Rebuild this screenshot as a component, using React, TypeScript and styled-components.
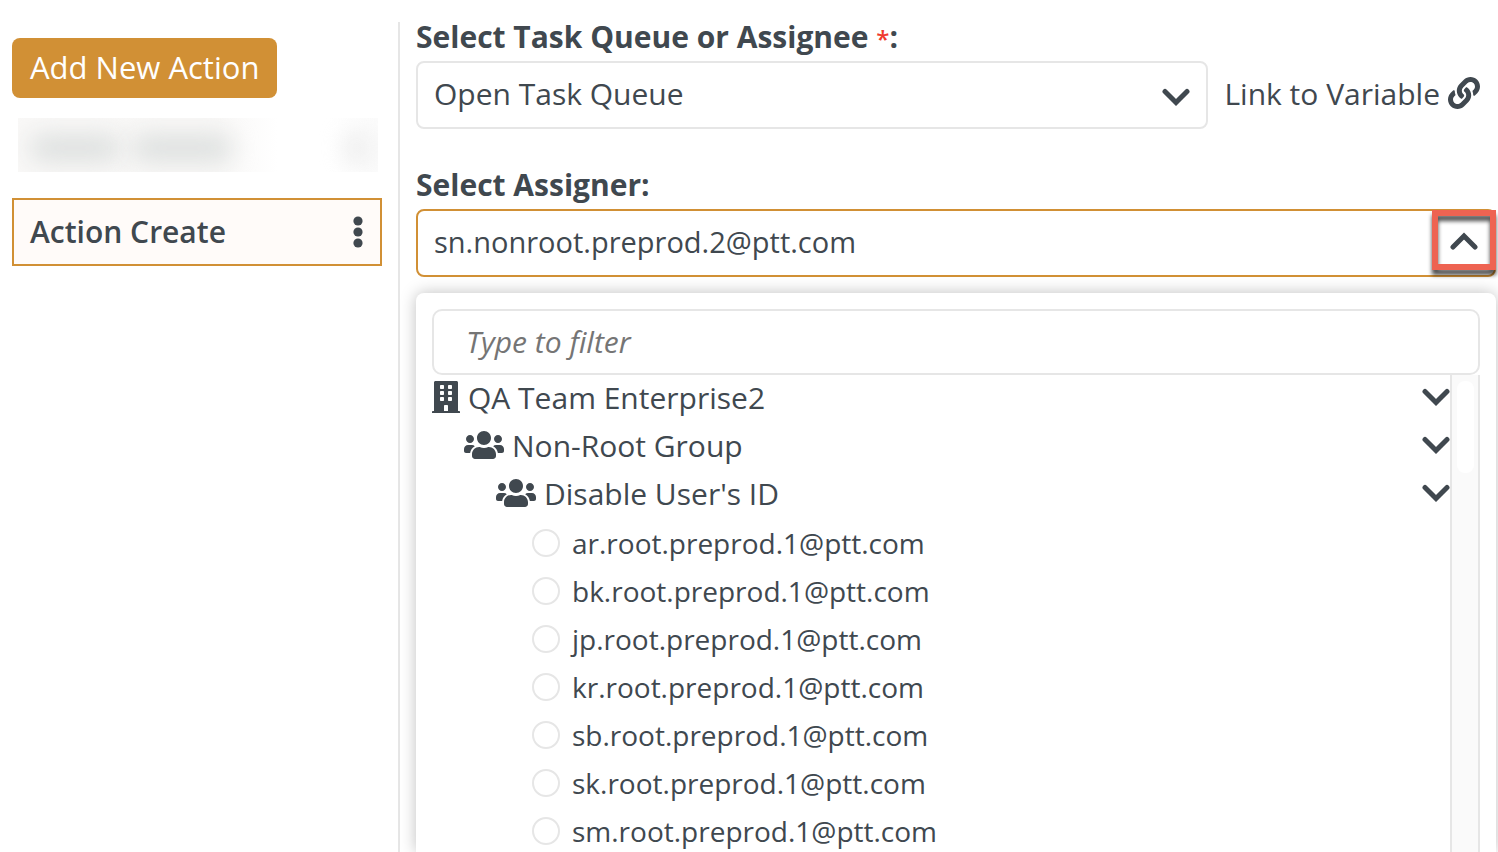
import React, { useState } from "react";
import styled, { createGlobalStyle } from "styled-components";
import { FaBuilding, FaLink, FaUsers } from "react-icons/fa";

const ink = "#40484f";
const line = "#e6e6e6";
const accent = "#d19035";

const GlobalStyle = createGlobalStyle`
  *, *::before, *::after { box-sizing: border-box; }
  body { margin: 0; background: #fff; }
  body, button, input, select {
    font-family: "Open Sans", "Noto Sans", sans-serif;
    font-size: 30px;
    line-height: 40px;
    color: ${ink};
  }
`;

const Page = styled.div`
  display: flex;
  height: 100vh;
  padding-top: 22px;
  overflow: hidden;
`;

const Sidebar = styled.aside`
  flex: none;
  width: 400px;
  padding: 16px 16px 0 12px;
  border-right: 2px solid ${line};
`;

const AddButton = styled.button`
  display: block;
  height: 60px;
  padding: 0 18px 2px;
  border: 0;
  border-radius: 8px;
  background: ${accent};
  color: #fff;
  font-size: 31px;
`;

const RedactedRow = styled.div`
  display: flex;
  align-items: center;
  gap: 12px;
  height: 54px;
  margin: 20px 4px 26px 6px;
  padding: 6px 10px 0 12px;
  overflow: hidden;
  background: linear-gradient(90deg, #f9f8f7 0, #f9f8f7 200px, #fff 260px, #fff 310px, #fbfbfb 360px);
`;

const Smudge = styled.span<{ $width: number; $end?: boolean }>`
  width: ${(p) => p.$width}px;
  height: 26px;
  margin-left: ${(p) => (p.$end ? "auto" : "0")};
  border-radius: 12px;
  background: ${(p) => (p.$end ? "#e6e6e6" : "#dcdfde")};
  filter: blur(12px);
`;

const ActionItem = styled.div`
  display: flex;
  align-items: center;
  justify-content: space-between;
  height: 68px;
  padding: 0 16px;
  border: 2px solid ${accent};
  background: #fffbf9;
  font-weight: 600;
`;

const IconButton = styled.button`
  display: flex;
  align-items: center;
  justify-content: center;
  padding: 0;
  border: 0;
  background: none;
`;

const Main = styled.main`
  flex: 1;
  min-width: 0;
  display: flex;
  flex-direction: column;
  padding: 0 2px 0 16px;
`;

const Label = styled.label`
  height: 39px;
  line-height: 30px;
  font-weight: 700;
`;

const Required = styled.span`
  color: #f03a2e;
  font-size: 24px;
  font-weight: 600;
`;

const QueueRow = styled.div`
  display: flex;
  align-items: center;
  gap: 16px;
  margin-bottom: 41px;
  padding-right: 16px;
`;

const SelectWrap = styled.div`
  position: relative;
  flex: 1;
  svg {
    position: absolute;
    right: 18px;
    top: 20px;
    pointer-events: none;
  }
`;

const Select = styled.select`
  appearance: none;
  display: block;
  width: 100%;
  height: 68px;
  padding: 0 56px 2px 16px;
  border: 2px solid ${line};
  border-radius: 8px;
  background: #fff;
`;

const VariableLink = styled.a`
  display: flex;
  align-items: center;
  gap: 8px;
  padding-bottom: 2px;
  color: ${ink};
  text-decoration: none;
  white-space: nowrap;
  svg { margin-bottom: 2px; }
`;

const Combo = styled.div`
  position: relative;
  flex: none;
  display: flex;
  height: 68px;
  margin-bottom: 16px;
  border: 2px solid ${accent};
  border-radius: 8px;
`;

const ComboInput = styled.input`
  flex: 1;
  min-width: 0;
  padding: 0 16px 2px;
  border: 0;
  background: none;
  outline: none;
  font-size: 29px;
`;

const ComboToggle = styled(IconButton)`
  width: 60px;
`;

const Highlight = styled.span`
  position: absolute;
  top: -1px;
  right: -2px;
  width: 64px;
  height: 60px;
  border: 6px solid #ee6352;
  filter: drop-shadow(0 5px 2px rgba(0, 0, 0, 0.7));
  pointer-events: none;
`;

const Panel = styled.div`
  flex: 1;
  min-height: 0;
  display: flex;
  flex-direction: column;
  padding: 16px 16px 0;
  border-radius: 8px 8px 0 0;
  background: #fff;
  box-shadow: 0 0 16px rgba(0, 0, 0, 0.25);
`;

const Filter = styled.input`
  flex: none;
  width: 100%;
  height: 66px;
  padding: 0 32px 2px;
  border: 2px solid ${line};
  border-radius: 10px;
  background: #fff;
  &::placeholder {
    color: #757575;
    font-style: italic;
    opacity: 1;
  }
`;

const TreeArea = styled.div`
  flex: 1;
  min-height: 0;
  display: flex;
`;

const Tree = styled.div`
  flex: 1;
  overflow: hidden;
`;

const Branch = styled.div<{ $level: number }>`
  display: flex;
  align-items: center;
  gap: 8px;
  height: 48px;
  padding-left: ${(p) => p.$level * 32}px;
  padding-bottom: 2px;
  svg { margin-bottom: 2px; }
`;

const BranchName = styled.span`
  flex: 1;
`;

const Person = styled.label`
  display: flex;
  align-items: center;
  gap: 12px;
  height: 48px;
  padding-left: 100px;
  font-size: 28px;
`;

const Radio = styled.input`
  appearance: none;
  width: 28px;
  height: 28px;
  margin: 0;
  border: 2px solid ${line};
  border-radius: 50%;
  background: #fff;
  &:checked { border: 8px solid ${accent}; }
`;

const Track = styled.div`
  flex: none;
  width: 30px;
  padding: 6px 4px 0 5px;
  border: solid ${line};
  border-width: 0 2px;
  background: #fafafa;
`;

const Thumb = styled.div`
  width: 17px;
  height: 92px;
  border-radius: 8px;
  background: #fff;
`;

const Chevron = ({ up }: { up?: boolean }) => (
  <svg width="28" height="32" viewBox="0 0 28 32" fill="none" stroke={ink} strokeWidth="5" strokeLinecap="round" aria-hidden="true">
    <path d={up ? "M3 20 14 9 25 20" : "M3 10.5 14 21.5 25 10.5"} />
  </svg>
);

const Dots = () => (
  <svg width="12" height="32" viewBox="0 0 12 32" fill={ink} aria-hidden="true">
    <circle cx="6" cy="5" r="4.6" />
    <circle cx="6" cy="16" r="4.6" />
    <circle cx="6" cy="27" r="4.6" />
  </svg>
);

const branches = [
  { name: "QA Team Enterprise2", Icon: FaBuilding, width: 28 },
  { name: "Non-Root Group", Icon: FaUsers, width: 40 },
  { name: "Disable User's ID", Icon: FaUsers, width: 40 },
];

const people = ["ar", "bk", "jp", "kr", "sb", "sk", "sm"].map((p) => `${p}.root.preprod.1@ptt.com`);

export default function App() {
  const [assigner, setAssigner] = useState("sn.nonroot.preprod.2@ptt.com");
  const [open, setOpen] = useState(true);
  return (
    <>
      <GlobalStyle />
      <Page>
        <Sidebar>
          <AddButton type="button">Add New Action</AddButton>
          <RedactedRow aria-hidden="true">
            <Smudge $width={90} />
            <Smudge $width={100} />
            <Smudge $width={22} $end />
          </RedactedRow>
          <ActionItem>
            Action Create
            <IconButton type="button" aria-label="Action menu">
              <Dots />
            </IconButton>
          </ActionItem>
        </Sidebar>
        <Main>
          <Label htmlFor="queue">
            Select Task Queue or Assignee <Required>*</Required>:
          </Label>
          <QueueRow>
            <SelectWrap>
              <Select id="queue">
                <option>Open Task Queue</option>
              </Select>
              <Chevron />
            </SelectWrap>
            <VariableLink href="#variable">
              Link to Variable <FaLink size={32} />
            </VariableLink>
          </QueueRow>
          <Label htmlFor="assigner">Select Assigner:</Label>
          <Combo>
            <ComboInput id="assigner" value={assigner} readOnly />
            <ComboToggle type="button" aria-label="Toggle list" onClick={() => setOpen(!open)}>
              <Chevron up={open} />
            </ComboToggle>
            <Highlight />
          </Combo>
          {open && (
            <Panel>
              <Filter type="text" placeholder="Type to filter" aria-label="Type to filter" />
              <TreeArea>
                <Tree>
                  {branches.map(({ name, Icon, width }, level) => (
                    <Branch key={name} $level={level}>
                      <Icon style={{ width, height: 32 }} />
                      <BranchName>{name}</BranchName>
                      <IconButton type="button" aria-label={`Collapse ${name}`}>
                        <Chevron />
                      </IconButton>
                    </Branch>
                  ))}
                  {people.map((person) => (
                    <Person key={person}>
                      <Radio type="radio" name="person" checked={assigner === person} onChange={() => setAssigner(person)} />
                      {person}
                    </Person>
                  ))}
                </Tree>
                <Track>
                  <Thumb />
                </Track>
              </TreeArea>
            </Panel>
          )}
        </Main>
      </Page>
    </>
  );
}
